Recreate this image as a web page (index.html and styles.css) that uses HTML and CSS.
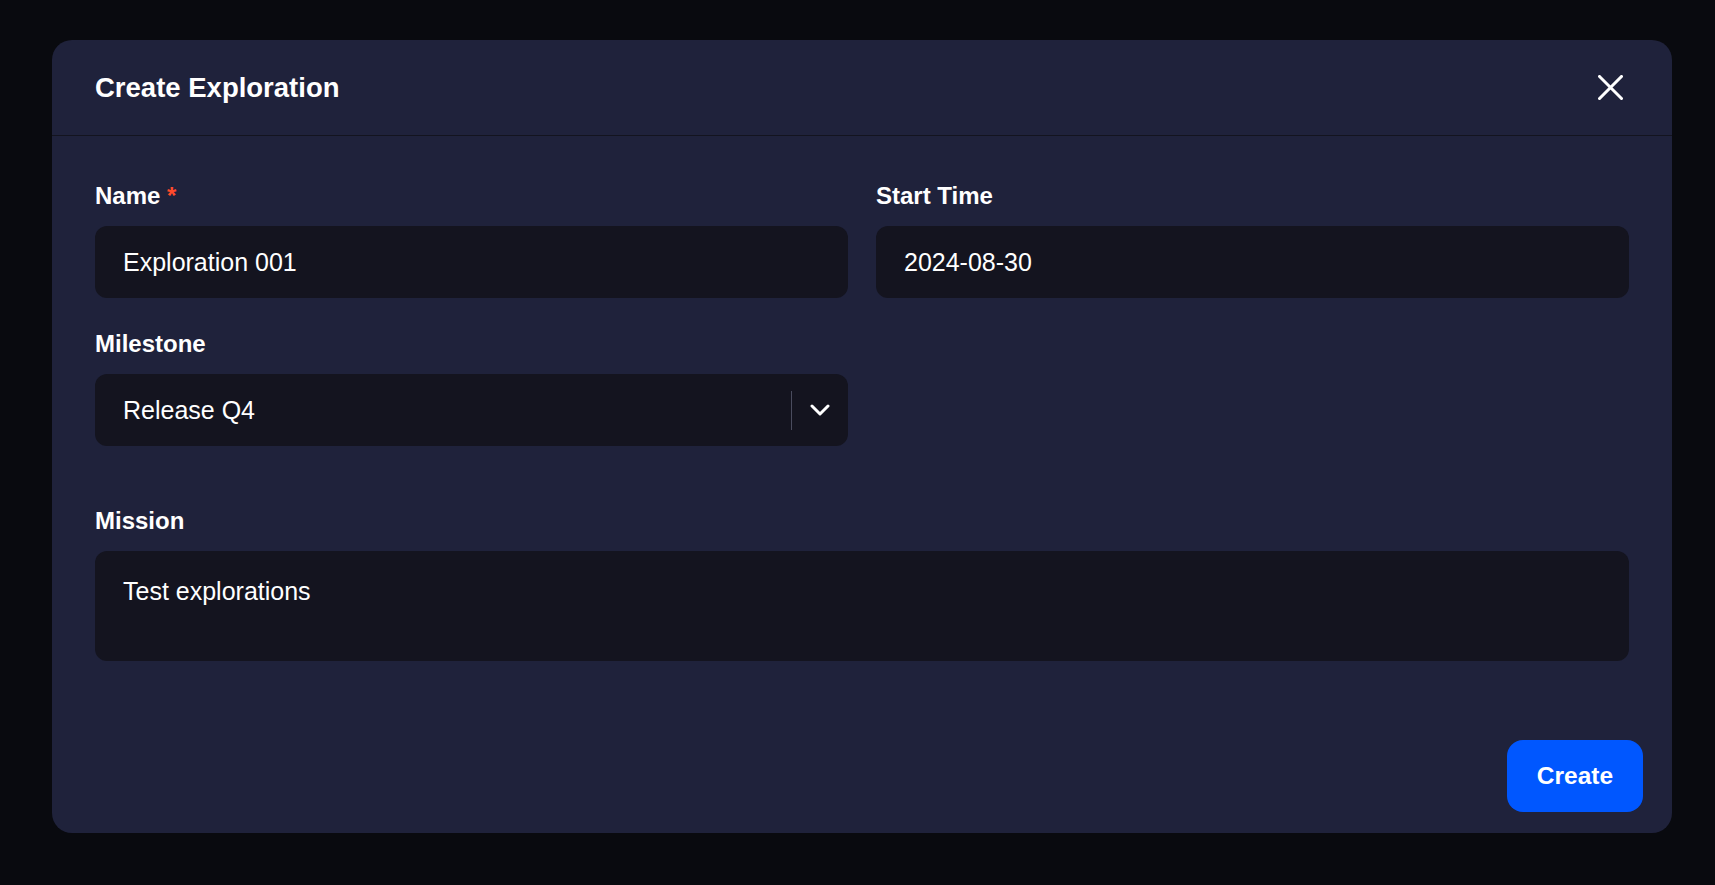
FILE: index.html
```html
<!DOCTYPE html>
<html lang="en">
<head>
<meta charset="utf-8">
<title>Create Exploration</title>
<link rel="stylesheet" href="styles.css">
</head>
<body>
<div class="modal">
  <div class="modal-header">
    <h2 class="modal-title">Create Exploration</h2>
    <button class="close-btn" aria-label="Close">
      <svg width="25" height="25" viewBox="0 0 25 25"><path d="M1.5 1.5 L23.5 23.5 M23.5 1.5 L1.5 23.5" stroke="#fff" stroke-width="3" stroke-linecap="square" fill="none"/></svg>
    </button>
  </div>
  <div class="modal-body">
    <div class="grid">
      <div class="field">
        <label class="label">Name <span class="req">*</span></label>
        <input class="input" type="text" value="Exploration 001">
      </div>
      <div class="field">
        <label class="label">Start Time</label>
        <input class="input" type="text" value="2024-08-30">
      </div>
      <div class="field">
        <label class="label">Milestone</label>
        <div class="select">
          <span class="select-value">Release Q4</span>
          <span class="select-sep"></span>
          <span class="select-arrow">
            <svg width="20" height="12" viewBox="0 0 20 12"><path d="M2 2 L10 10 L18 2" stroke="#fff" stroke-width="3" stroke-linecap="round" stroke-linejoin="round" fill="none"/></svg>
          </span>
        </div>
      </div>
    </div>
    <div class="field mission">
      <label class="label">Mission</label>
      <textarea class="textarea">Test explorations</textarea>
    </div>
  </div>
  <div class="modal-footer">
    <button class="btn-primary">Create</button>
  </div>
</div>
</body>
</html>
```
FILE: styles.css
```css
* { box-sizing: border-box; }
html, body { margin: 0; padding: 0; }
body {
  background: #090a0f;
  width: 1715px;
  height: 885px;
  padding: 40px 43px 0 52px;
  font-family: "Liberation Sans", Arial, sans-serif;
  color: #fff;
  overflow: hidden;
}
.modal {
  width: 1620px;
  height: 793px;
  background: #1f223b;
  border-radius: 20px;
  display: flex;
  flex-direction: column;
}
.modal-header {
  height: 96px;
  border-bottom: 1px solid #13141f;
  display: flex;
  align-items: center;
  justify-content: space-between;
  padding: 0 43px 0 43px;
}
.modal-title {
  margin: 0;
  font-size: 27.5px;
  font-weight: 700;
  letter-spacing: 0;
}
.close-btn {
  background: none;
  border: none;
  padding: 6px;
  display: flex;
  cursor: pointer;
}
.modal-body {
  padding: 46px 43px 0 43px;
}
.grid {
  display: grid;
  grid-template-columns: 1fr 1fr;
  column-gap: 28px;
  row-gap: 32px;
}
.field {
  display: flex;
  flex-direction: column;
  gap: 16px;
}
.mission { margin-top: 61px; }
.label {
  font-size: 24px;
  line-height: 28px;
  height: 28px;
  font-weight: 700;
}
.req { color: #ff4a2b; }
.input, .textarea, .select {
  background: #14141f;
  border: none;
  border-radius: 12px;
  color: #fff;
  font-family: "Liberation Sans", Arial, sans-serif;
  font-size: 25px;
  outline: none;
}
.input {
  height: 72px;
  padding: 0 28px;
  width: 100%;
}
.select {
  height: 72px;
  display: flex;
  align-items: center;
}
.select-value {
  flex: 1;
  padding-left: 28px;
}
.select-sep {
  width: 1px;
  height: 39px;
  background: #4a4c5e;
}
.select-arrow {
  width: 56px;
  display: flex;
  justify-content: center;
  align-items: center;
}
.textarea {
  height: 110px;
  width: 100%;
  padding: 25px 28px;
  line-height: 30px;
  resize: none;
  display: block;
}
.modal-footer {
  margin-top: auto;
  display: flex;
  justify-content: flex-end;
  padding: 0 29px 21px 0;
}
.btn-primary {
  width: 136px;
  height: 72px;
  background: #0057ff;
  border: none;
  border-radius: 16px;
  color: #fff;
  font-family: "Liberation Sans", Arial, sans-serif;
  font-size: 24.5px;
  font-weight: 700;
  cursor: pointer;
}
```
